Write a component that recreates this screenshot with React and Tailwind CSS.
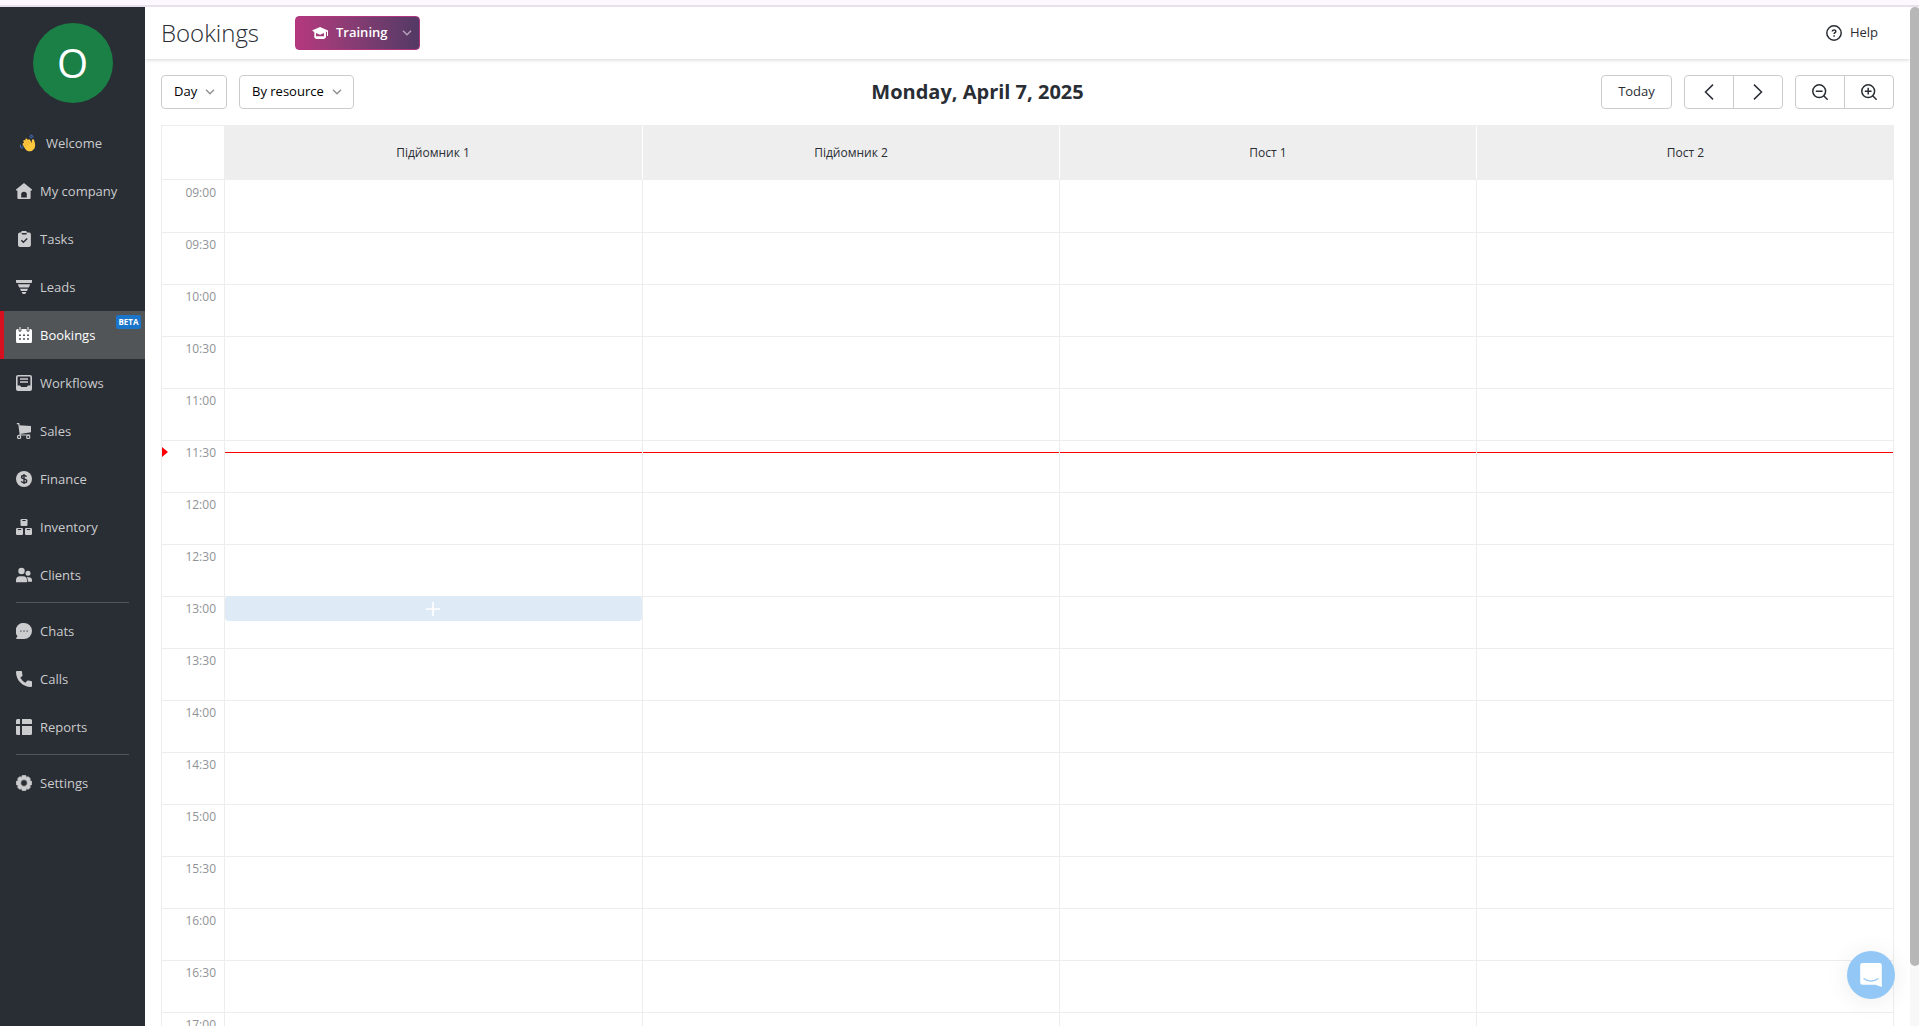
import React from "react";

const C = "#cbcccd";

function Wave() {
  return (
    <svg width="18" height="18" viewBox="0 0 18 18">
      <g transform="translate(1.500 1)">
        <path d="M2.300 9.700C1.600 8.600 2.900 7.500 3.800 8.500L2.900 6.600C2.300 5.300 4 4.300 4.800 5.600L5.300 6.400 4.800 5.100C4.300 3.700 6.200 2.900 6.900 4.200L7.600 5.600C7.200 4.200 8.900 3.600 9.500 4.800L11.200 8.300C11.400 6.600 10.900 4.700 12.200 4.200 13.600 3.800 13.800 5.600 14.300 7.600 15.300 11.600 14.200 14.700 11.200 15.900 8.600 16.900 6 15.900 4.600 13.700z" fill="#ffc83d" />
        <path d="M3.800 8.500l1.900 2.900M5.200 6.300l2.200 3.800M7.400 5.500l1.900 3.600" stroke="#e0992b" strokeWidth=".6" fill="none" />
        <path d="M8.700 1.900c1.300-.3 2.300.3 2.800 1.500M9.600.2c1.700-.1 2.800.8 3.200 2.200M.2 9.800C-.7 11.300.3 13 2 13.300M1.900 10.600c-.1.900.4 1.500 1.100 1.700" stroke="#3f64a8" strokeWidth="1.200" fill="none" />
      </g>
    </svg>
  );
}

const icons = {
  home: (
    <path fillRule="evenodd" d="M8 0l8 6.600v1H14.600V15a1 1 0 0 1-1 1H2.400a1 1 0 0 1-1-1V7.600H0v-1zM5.200 14.500h5.600V11.600a2.800 2.800 0 0 0-5.600 0z" />
  ),
  tasks: (
    <>
      <path d="M3.500 1.500H5.200a2.800 2 0 0 1 5.600 0h1.700A2 2 0 0 1 14.900 3.500V14a2 2 0 0 1-2 2H4a2 2 0 0 1-2-2V3.500a2 2 0 0 1 1.500-2z" />
      <path d="M5.800 2.700h4.800M5.300 9.200l2.100 2.100 3.800-3.900" stroke="#292d34" strokeWidth="1.400" fill="none" />
    </>
  ),
  leads: (
    <path d="M0 1h16v2.300l-.5.700H.5L0 3.300zM1.800 5.300h12.400L12.800 8.500H3.200zM4 9.800h8L11 12H5zM5.600 13h4.800l-.9 1.700-.8.300H7.300l-.8-.3z" />
  ),
  bookings: (
    <>
      <path d="M0 3.500A1.500 1.500 0 0 1 1.500 2H2.500V3.200a1.500 1.500 0 0 0 3 0V2h5V3.200a1.500 1.500 0 0 0 3 0V2h1A1.500 1.500 0 0 1 16 3.500v11a1.500 1.500 0 0 1-1.500 1.500h-13A1.500 1.500 0 0 1 0 14.500z" />
      <path d="M3.500 0h1v3.500h-1zM11.500 0h1v3.500h-1z" />
      <path d="M3 7.500h2V9H3zM7 7.500h2V9H7zM11 7.500h2V9h-2zM3 11.200h2v1.500H3zM7 11.200h2v1.500H7zM11 11.200h2v1.500h-2z" fill="#515558" />
    </>
  ),
  workflows: (
    <>
      <path fillRule="evenodd" d="M2 0h12a2 2 0 0 1 2 2v12a2 2 0 0 1-2 2H2a2 2 0 0 1-2-2V2a2 2 0 0 1 2-2zM1.600 2v8.400H4l1.300 1.600h5.400l1.300-1.600h2.400V2a.6.600 0 0 0-.6-.6H2.200a.6.600 0 0 0-.6.600z" />
      <path d="M4 4h8M4 7h8" stroke={C} strokeWidth="1.500" />
    </>
  ),
  sales: (
    <>
      <path d="M3.200 2.200L15 3v6.300L4.200 11z" />
      <path d="M.8.700h2l1.500 11M3.400 12h10.800" stroke={C} strokeWidth="1.200" fill="none" />
      <circle cx="3.100" cy="14" r="1.600" stroke={C} strokeWidth="1.200" fill="#292d34" />
      <circle cx="12.200" cy="14" r="1.600" stroke={C} strokeWidth="1.200" fill="#292d34" />
    </>
  ),
  finance: (
    <>
      <circle cx="8" cy="8" r="8" />
      <path d="M10.600 5.700C10 4.700 9 4.500 8 4.500c-1.500 0-2.500.6-2.500 1.700C5.500 8.600 10.700 7.200 10.700 9.900c0 1.200-1.200 1.800-2.700 1.800-1.200 0-2.300-.4-2.800-1.400M8 3v10" stroke="#292d34" strokeWidth="1.400" fill="none" />
    </>
  ),
  inventory: (
    <>
      <rect x="4.500" width="7" height="7" rx="1.200" />
      <rect y="9" width="7" height="7" rx="1.200" />
      <rect x="9" y="9" width="7" height="7" rx="1.200" />
      <path d="M6.300 1.500h3.400M1.800 10.500h3.400M10.800 10.500h3.400" stroke="#292d34" strokeWidth="1.100" />
    </>
  ),
  clients: (
    <>
      <circle cx="5.500" cy="4" r="3.200" />
      <circle cx="12" cy="6.300" r="2.500" />
      <path d="M0 15.300v-2a4.200 4.200 0 0 1 4-4.100h3a4.200 4.200 0 0 1 4 4.100v2zM11.800 14.700v-1.500a5 5 0 0 0-1.100-3h2A3.300 3.300 0 0 1 16 13.500v1.200z" />
    </>
  ),
  chats: (
    <>
      <path d="M8 0a8 8 0 1 1 0 16H.3V14.700l1.200-1.500A8 8 0 0 1 8 0z" />
      <path d="M4 7.200h1.700v1.700H4zM7.200 7.200h1.700v1.700H7.200zM10.300 7.200H12v1.700h-1.700z" fill="#85888b" />
    </>
  ),
  calls: (
    <path d="M1 0h4.200a.9.900 0 0 1 .9.900c0 1.100.1 2.200.4 3.200.1.300 0 .7-.2.900L4.300 6.800A12.500 12.500 0 0 0 9.300 11.700l1.900-1.900c.3-.3.600-.3.900-.2 1 .3 2 .4 3 .4.500 0 .9.400.9.900V15a1 1 0 0 1-1 1C6.700 16 0 9.300 0 1a1 1 0 0 1 1-1z" />
  ),
  reports: (
    <path d="M1.500 0H4v5H0V1.500A1.500 1.500 0 0 1 1.500 0zM6 0h8.500A1.500 1.500 0 0 1 16 1.500V5H6zM0 7h4v9H1.500A1.500 1.500 0 0 1 0 14.500zM6 7h10v7.500a1.500 1.500 0 0 1-1.500 1.500H6z" />
  ),
  settings: (
    <path fillRule="evenodd" stroke="currentColor" strokeWidth=".8" strokeLinejoin="round" d="M6.300.4h3.400l.7 2 1.900-.7 2 2-.7 1.900 2 .7v3.400l-2 .7.700 1.900-2 2-1.900-.7-.7 2H6.300l-.7-2-1.900.7-2-2 .7-1.900-2-.7V6.300l2-.7-.7-1.900 2-2 1.900.7zM8 4.600a3.400 3.400 0 1 0 0 6.800 3.400 3.400 0 0 0 0-6.800z" />
  ),
};

function NavItem({ icon, label, active, badge }) {
  return (
    <a
      className={
        active
          ? "relative flex h-12 items-center gap-2 border-l-4 border-[#d6101f] bg-[#515558] pl-3 text-white"
          : "relative flex h-12 items-center gap-2 pl-4 text-[#cbcccd]"
      }
    >
      <svg width="16" height="16" viewBox="0 0 16 16" fill="currentColor">
        {icons[icon]}
      </svg>
      <span>{label}</span>
      {badge && (
        <span className="absolute top-1 right-1 flex h-[14px] w-[25px] items-center justify-center rounded-xs bg-[#1b75c9] text-[8px] font-bold text-white">
          {badge}
        </span>
      )}
    </a>
  );
}

function Sidebar() {
  return (
    <nav className="w-[145px] shrink-0 bg-[#292d34] text-[13px] leading-5">
      <div className="flex h-28 justify-center pt-4">
        <div className="flex size-20 items-center justify-center rounded-full bg-[#1b8045] text-[40px] text-white">O</div>
      </div>
      <a className="flex h-12 items-center gap-[9px] pl-[19px] text-[#cbcccd]">
        <Wave />
        <span>Welcome</span>
      </a>
      <NavItem icon="home" label="My company" />
      <NavItem icon="tasks" label="Tasks" />
      <NavItem icon="leads" label="Leads" />
      <NavItem icon="bookings" label="Bookings" active badge="BETA" />
      <NavItem icon="workflows" label="Workflows" />
      <NavItem icon="sales" label="Sales" />
      <NavItem icon="finance" label="Finance" />
      <NavItem icon="inventory" label="Inventory" />
      <NavItem icon="clients" label="Clients" />
      <div className="mx-4 mt-[3px] mb-1 h-px bg-[#515558]" />
      <NavItem icon="chats" label="Chats" />
      <NavItem icon="calls" label="Calls" />
      <NavItem icon="reports" label="Reports" />
      <div className="mx-4 mt-[3px] mb-1 h-px bg-[#515558]" />
      <NavItem icon="settings" label="Settings" />
    </nav>
  );
}

function Chevron({ color }) {
  return (
    <svg width="10" height="6" viewBox="0 0 10 6" fill="none" stroke={color} strokeWidth="1.500">
      <path d="M1 .8l4 4 4-4" />
    </svg>
  );
}

function Header() {
  return (
    <header className="z-10 flex h-[52px] shrink-0 items-center bg-white pl-4 text-[#292d34] shadow-[0_1px_4px_rgba(0,0,0,0.16)]">
      <h1 className="w-[134px] text-[24px] leading-8 font-light">Bookings</h1>
      <button className="flex h-[34px] w-[125px] items-center rounded border border-[#b0357f] bg-linear-to-r from-[#b5387f] to-[#533965] pl-4 text-left text-[13px] font-semibold text-white">
        <svg width="16" height="12" viewBox="0 0 16 12" fill="#fff">
          <path d="M8 0l8 3.600V9h-1V4.600l-1 .4v5.500L12 12H4l-1.700-1.500V5L0 3.600zM4 6v3.300h8V6L8 7.700z" />
        </svg>
        <span className="ml-2 w-[66px]">Training</span>
        <Chevron color="#b3a0ba" />
      </button>
      <div className="ml-auto mr-8 flex items-center gap-2 text-[13px]">
        <svg width="16" height="16" viewBox="0 0 16 16" fill="none" stroke="#292d34" strokeWidth="1.500">
          <circle cx="8" cy="8" r="7.200" />
          <path d="M6.200 6.600c0-2.300 3.600-2.200 3.600-.2 0 1.200-1.700 1.200-1.700 2.500M8.100 10.300v1.500" />
        </svg>
        <span>Help</span>
      </div>
    </header>
  );
}

function ZoomIcon({ plus }) {
  return (
    <svg width="16" height="16" viewBox="0 0 16 16" fill="none" stroke="#292d34" strokeWidth="1.500">
      <circle cx="7.200" cy="7.200" r="6.400" />
      <path d="M11.700 11.700l4 4M3.800 7.200h6.800" />
      {plus && <path d="M7.200 3.800v6.800" />}
    </svg>
  );
}

function Toolbar() {
  return (
    <div className="flex h-[34px] items-stretch justify-between text-[13px]">
      <div className="flex gap-3 text-black">
        <button className="flex w-[66px] items-center gap-2 rounded border border-[#cbcccd] pl-3">
          Day
          <Chevron color="#909396" />
        </button>
        <button className="flex w-[115px] items-center gap-2 rounded border border-[#cbcccd] pl-3">
          By resource
          <Chevron color="#909396" />
        </button>
      </div>
      <h2 className="self-center text-[20px] leading-7 font-bold text-[#292d34]">Monday, April 7, 2025</h2>
      <div className="flex justify-end gap-3 text-[#292d34]">
        <button className="w-[71px] rounded border border-[#cbcccd]">Today</button>
        <div className="flex w-[99px] rounded border border-[#cbcccd]">
          <button className="flex w-[49px] items-center justify-center border-r border-[#cbcccd]">
            <svg width="10" height="16" viewBox="0 0 10 16" fill="none" stroke="#292d34" strokeWidth="1.500">
              <path d="M9 .6L1.500 8 9 15.400" />
            </svg>
          </button>
          <button className="flex flex-1 items-center justify-center">
            <svg width="10" height="16" viewBox="0 0 10 16" fill="none" stroke="#292d34" strokeWidth="1.500">
              <path d="M1 .6L8.500 8 1 15.400" />
            </svg>
          </button>
        </div>
        <div className="flex w-[99px] rounded border border-[#cbcccd]">
          <button className="flex w-[49px] items-center justify-center border-r border-[#cbcccd]">
            <ZoomIcon />
          </button>
          <button className="flex flex-1 items-center justify-center">
            <ZoomIcon plus />
          </button>
        </div>
      </div>
    </div>
  );
}

const resources = ["Підйомник 1", "Підйомник 2", "Пост 1", "Пост 2"];
const times = Array.from({ length: 17 }, (_, i) => {
  const h = String(9 + Math.floor(i / 2)).padStart(2, "0");
  return `${h}:${i % 2 ? "30" : "00"}`;
});

function Calendar() {
  return (
    <div className="mt-4 w-[1733px] text-[12px] text-[#292d34]">
      <div className="flex h-[55px]">
        <div className="w-[63px] border-t border-b border-l border-[#ededed]" />
        <div className="grid flex-1 grid-cols-[419px_417px_417px_417px] bg-[#eeeeee]">
          {resources.map((r, i) => (
            <div key={r} className={i < 3 ? "my-px flex items-center justify-center border-r border-white" : "my-px flex items-center justify-center"}>
              {r}
            </div>
          ))}
        </div>
      </div>
      {times.map((t, i) => (
        <div key={t} className={i === 0 ? "relative flex h-[53px]" : "relative flex h-[52px]"}>
          <div className="w-16 border-x border-b border-[#ededed] pr-2 text-right text-[#909396]">
            <div className={i === 0 ? "pt-1 leading-[18px]" : "pt-[3px] leading-[18px]"}>{t}</div>
          </div>
          <div className="grid flex-1 grid-cols-[418px_417px_417px_417px]">
            {resources.map((r, c) => (
              <div key={r} className="relative border-r border-b border-[#ededed]">
                {t === "11:30" && <div className="absolute top-[11px] right-0 left-0 h-px bg-[#fb0007]" />}
                {t === "13:00" && c === 0 && (
                  <div className="absolute -top-px right-0 left-0 flex h-[25px] items-center justify-center rounded bg-[#deebf6] pr-px">
                    <svg width="14" height="14" viewBox="0 0 14 14" stroke="#fff" strokeWidth="1.600">
                      <path d="M7 0v14M0 7h14" />
                    </svg>
                  </div>
                )}
              </div>
            ))}
          </div>
          {t === "11:30" && (
            <svg className="absolute top-1.5 left-px" width="6" height="10" viewBox="0 0 6 10" fill="#fb0007">
              <path d="M0 0l6 5-6 5z" />
            </svg>
          )}
        </div>
      ))}
    </div>
  );
}

export default function App() {
  return (
    <div className="relative flex h-[1026px] w-[1919px] flex-col overflow-hidden bg-white font-['Open_Sans','Noto_Sans',sans-serif]">
      <div className="h-[7px] shrink-0 border-b-2 border-[#e8e0eb] bg-[#fdf7ff]" />
      <div className="flex min-h-0 flex-1">
        <Sidebar />
        <div className="flex min-w-0 flex-1 flex-col overflow-hidden">
          <Header />
          <main className="min-h-0 flex-1 overflow-hidden pt-4 pr-4 pl-4">
            <Toolbar />
            <Calendar />
          </main>
        </div>
        <div className="w-[9px] shrink-0 bg-[#f8f8f8]">
          <div className="h-[959px] w-[10px] rounded-[5px] bg-[#b7b7b7]" />
        </div>
      </div>
      <button className="absolute top-[951px] left-[1847px] z-20 flex size-12 items-center justify-center rounded-full bg-[#92c7f6] shadow-[0_2px_24px_rgba(0,0,0,0.08)]">
        <svg width="22" height="24" viewBox="0 0 22 24">
          <path d="M2.500 0h17A2.300 2.300 0 0 1 21.800 2.300V24l-6.500-2.200H2.500A2.300 2.300 0 0 1 .2 19.500V2.300A2.300 2.300 0 0 1 2.500 0z" fill="#fff" />
          <path d="M4 15.800c4 3 10 3 14 0" fill="none" stroke="#92c7f6" strokeWidth="1.300" strokeLinecap="round" />
        </svg>
      </button>
    </div>
  );
}
